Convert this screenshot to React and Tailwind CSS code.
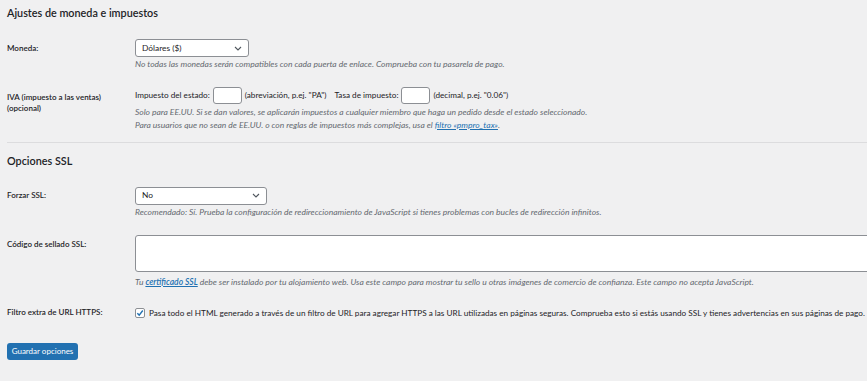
import React from 'react';

function Chevron() {
  return (
    <svg width="8" height="5" viewBox="0 0 8 5" className="shrink-0">
      <path d="M1 1l3 3 3-3" fill="none" stroke="#50575e" strokeWidth="1.1" />
    </svg>
  );
}

function Select({ value, width }) {
  return (
    <div className={`flex h-[18px] items-center justify-between rounded-[3px] border border-[#8c8f94] bg-white pl-[6px] pr-[6px] text-[8.4px] ${width}`}>
      <span>{value}</span>
      <Chevron />
    </div>
  );
}

function Desc({ children, className = '' }) {
  return <p className={`text-[8.5px] italic leading-[12px] text-[#646970] ${className}`}>{children}</p>;
}

function Label({ children, className = '' }) {
  return <div className={`w-[128px] shrink-0 text-[8px] font-semibold leading-[11px] ${className}`}>{children}</div>;
}

export default function App() {
  return (
    <div className="min-h-screen overflow-hidden bg-[#f0f0f1] pl-[7px] text-[#1d2327]" style={{ fontFamily: 'Lato, "Noto Sans", sans-serif' }}>
      <h2 className="mt-[5px] text-[10.8px] font-semibold leading-[16px]">Ajustes de moneda e impuestos</h2>

      {/* Moneda */}
      <div className="mt-[18px] flex">
        <Label className="pt-[3.5px]">Moneda:</Label>
        <div>
          <Select value="Dólares ($)" width="w-[114px]" />
          <Desc className="mt-[1px]">No todas las monedas serán compatibles con cada puerta de enlace. Comprueba con tu pasarela de pago.</Desc>
        </div>
      </div>

      {/* IVA */}
      <div className="mt-[17px] flex">
        <Label className="pt-[4.5px]">
          IVA (impuesto a las ventas)
          <br />
          (opcional)
        </Label>
        <div>
          <div className="flex h-[17px] items-center text-[8.2px]">
            <span>Impuesto del estado:</span>
            <span className="mx-[3px] h-[17px] w-[29px] rounded-[3px] border border-[#8c8f94] bg-white" />
            <span>(abreviación, p.ej. "PA")</span>
            <span className="ml-[8px]">Tasa de impuesto:</span>
            <span className="mx-[3px] h-[17px] w-[29px] rounded-[3px] border border-[#8c8f94] bg-white" />
            <span>(decimal, p.ej. "0.06")</span>
          </div>
          <div className="mt-[1.5px] text-[8.5px] italic leading-[13px] text-[#646970]">
            <p>Solo para EE.UU. Si se dan valores, se aplicarán impuestos a cualquier miembro que haga un pedido desde el estado seleccionado.</p>
            <p>
              Para usuarios que no sean de EE.UU. o con reglas de impuestos más complejas, usa el{' '}
              <a className="text-[#2271b1] underline">filtro «pmpro_tax»</a>.
            </p>
          </div>
        </div>
      </div>

      <hr className="mt-[10px] border-t border-[#dcdcde]" />

      <h2 className="mt-[10px] text-[10.8px] font-semibold leading-[16px]">Opciones SSL</h2>

      {/* Forzar SSL */}
      <div className="mt-[18px] flex">
        <Label className="pt-[3.5px]">Forzar SSL:</Label>
        <div>
          <Select value="No" width="w-[132px]" />
          <Desc className="mt-[1px]">Recomendado: Sí. Prueba la configuración de redireccionamiento de JavaScript si tienes problemas con bucles de redirección infinitos.</Desc>
        </div>
      </div>

      {/* Código de sellado */}
      <div className="mt-[17px] flex">
        <Label className="pt-[4.5px]">Código de sellado SSL:</Label>
        <div>
          <div className="h-[37px] w-[760px] rounded-[3px] border border-[#8c8f94] bg-white" />
          <Desc className="mt-[4px]">
            Tu <a className="font-semibold text-[#2271b1] underline">certificado SSL</a> debe ser instalado por tu alojamiento web. Usa este campo para mostrar tu sello u otras imágenes de comercio de confianza. Este campo no acepta JavaScript.
          </Desc>
        </div>
      </div>

      {/* Filtro HTTPS */}
      <div className="mt-[18px] flex items-center">
        <Label>Filtro extra de URL HTTPS:</Label>
        <div className="flex items-center text-[8.2px] leading-[14px]">
          <span className="flex h-[10px] w-[10px] items-center justify-center rounded-[2px] border border-[#8c8f94] bg-white">
            <svg width="8" height="8" viewBox="0 0 8 8">
              <path d="M1.3 4.2l1.9 1.9 3.6-4.6" fill="none" stroke="#2271b1" strokeWidth="1.4" />
            </svg>
          </span>
          <span className="ml-[4px] whitespace-nowrap">
            Pasa todo el HTML generado a través de un filtro de URL para agregar HTTPS a las URL utilizadas en páginas seguras. Comprueba esto si estás usando SSL y tienes advertencias en sus páginas de pago.
          </span>
        </div>
      </div>

      <button className="mt-[23px] h-[17px] w-[71px] rounded-[3px] bg-[#2271b1] text-[8px] leading-[17px] text-white" type="button">
        Guardar opciones
      </button>
    </div>
  );
}
